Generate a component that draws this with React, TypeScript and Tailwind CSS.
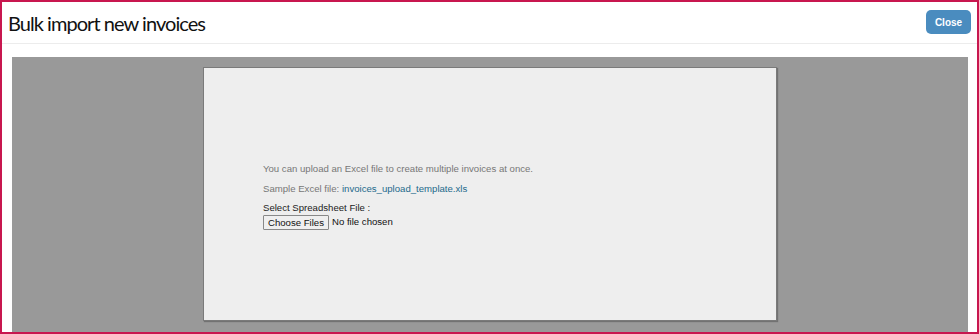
export default function App() {
  return (
    <div className="w-[979px] h-[334px] bg-white border-2 border-[#c8174f] flex flex-col" style={{ fontFamily: '"Liberation Sans", Arial, sans-serif' }}>
      <div className="h-[42px] flex items-start justify-between border-b border-[#ececec] shrink-0">
        <div className="pl-[6px] pt-[9px] text-[20px] leading-[24px] tracking-[-0.95px] text-[#111]" style={{ fontFamily: 'Lato, "Liberation Sans", sans-serif' }}>Bulk import new invoices</div>
        <button className="mt-[8px] mr-[6px] w-[45px] h-[24px] rounded-[5px] bg-[#4a8cbf] text-white text-[10px] font-bold">Close</button>
      </div>
      <div className="flex-1 pt-[13px] pl-[10px] pr-[9px]">
        <div className="h-full bg-[#999999] pt-[10px] flex justify-center">
          <div className="w-[574px] h-[254px] bg-[#eeeeee] border border-[#7a7a7a] shadow-[1px_1px_1px_rgba(0,0,0,0.25)] pl-[59px] pt-[95px]">
            <div className="text-[9.6px] leading-[12px] text-[#777]">You can upload an Excel file to create multiple invoices at once.</div>
            <div className="mt-[8px] text-[9.6px] leading-[12px] text-[#777]">Sample Excel file: <span className="text-[#1d6a8c]">invoices_upload_template.xls</span></div>
            <div className="mt-[7px] text-[9.6px] leading-[12px] text-[#222]">Select Spreadsheet File :</div>
            <div className="flex items-center mt-[1px]">
              <span className="h-[15px] px-[4px] border border-[#888] bg-[#efefef] text-[9.6px] leading-[13px] text-[#111] rounded-[1px]">Choose Files</span>
              <span className="ml-[3px] text-[9.6px] text-[#111]">No file chosen</span>
            </div>
          </div>
        </div>
      </div>
    </div>
  );
}
